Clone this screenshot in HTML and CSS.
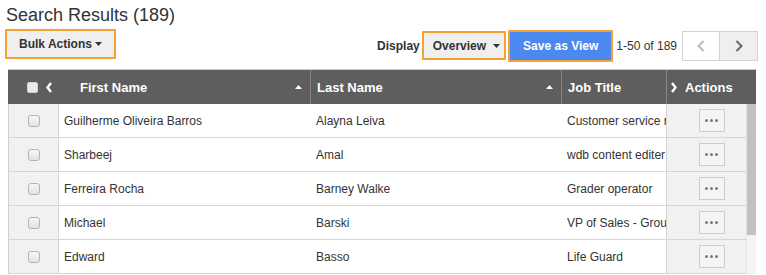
FILE: index.html
```html
<!DOCTYPE html>
<html lang="en">
<head>
  <meta charset="UTF-8">
  <title>Search Results</title>
  <link rel="stylesheet" href="styles.css">
</head>
<body>
  <h1 class="title">Search Results (189)</h1>

  <div class="toolbar">
    <button class="btn btn-bulk">Bulk Actions
      <svg class="caret" width="7" height="4" viewBox="0 0 7 4"><polygon points="0,0 7,0 3.5,4" fill="#333"/></svg>
    </button>
    <div class="toolbar-right">
      <span class="label">Display</span>
      <button class="btn btn-view">Overview
        <svg class="caret" width="7" height="4" viewBox="0 0 7 4"><polygon points="0,0 7,0 3.5,4" fill="#333"/></svg>
      </button>
      <button class="btn btn-save">Save as View</button>
      <span class="count">1-50 of 189</span>
      <div class="pager">
        <span class="pager-prev">
          <svg width="8" height="12" viewBox="0 0 8 12"><polyline points="6.5,1 1.5,6 6.5,11" fill="none" stroke="#bbb" stroke-width="2"/></svg>
        </span>
        <span class="pager-next">
          <svg width="8" height="12" viewBox="0 0 8 12"><polyline points="1.5,1 6.5,6 1.5,11" fill="none" stroke="#666" stroke-width="2"/></svg>
        </span>
      </div>
    </div>
  </div>

  <div class="grid">
    <div class="grid-head">
      <div class="hcell hcheck">
        <span class="hbox"></span>
        <svg width="6" height="11" viewBox="0 0 6 11"><polyline points="5,1 1.5,5.5 5,10" fill="none" stroke="#fff" stroke-width="2.4"/></svg>
      </div>
      <div class="hcell hfirst">First Name
        <svg width="7" height="4" viewBox="0 0 7 4"><polygon points="0,4 7,4 3.5,0" fill="#fff"/></svg>
      </div>
      <div class="hcell hlast">Last Name
        <svg width="7" height="4" viewBox="0 0 7 4"><polygon points="0,4 7,4 3.5,0" fill="#fff"/></svg>
      </div>
      <div class="hcell hjob">Job Title</div>
      <div class="hcell hact">
        <svg width="6" height="11" viewBox="0 0 6 11"><polyline points="1,1 4.5,5.5 1,10" fill="none" stroke="#fff" stroke-width="2.4"/></svg>
        Actions
      </div>
    </div>

    <div class="grid-body">
      <div class="row">
        <div class="cell ccheck"><span class="cbox"></span></div>
        <div class="cell cfirst">Guilherme Oliveira Barros</div>
        <div class="cell clast">Alayna Leiva</div>
        <div class="cell cjob">Customer service representative</div>
        <div class="cell cact"><span class="more"><i></i><i></i><i></i></span></div>
      </div>
      <div class="row">
        <div class="cell ccheck"><span class="cbox"></span></div>
        <div class="cell cfirst">Sharbeej</div>
        <div class="cell clast">Amal</div>
        <div class="cell cjob">wdb content editer</div>
        <div class="cell cact"><span class="more"><i></i><i></i><i></i></span></div>
      </div>
      <div class="row">
        <div class="cell ccheck"><span class="cbox"></span></div>
        <div class="cell cfirst">Ferreira Rocha</div>
        <div class="cell clast">Barney Walke</div>
        <div class="cell cjob">Grader operator</div>
        <div class="cell cact"><span class="more"><i></i><i></i><i></i></span></div>
      </div>
      <div class="row">
        <div class="cell ccheck"><span class="cbox"></span></div>
        <div class="cell cfirst">Michael</div>
        <div class="cell clast">Barski</div>
        <div class="cell cjob">VP of Sales - Group</div>
        <div class="cell cact"><span class="more"><i></i><i></i><i></i></span></div>
      </div>
      <div class="row">
        <div class="cell ccheck"><span class="cbox"></span></div>
        <div class="cell cfirst">Edward</div>
        <div class="cell clast">Basso</div>
        <div class="cell cjob">Life Guard</div>
        <div class="cell cact"><span class="more"><i></i><i></i><i></i></span></div>
      </div>

      <!-- scrollbar sits over the actions column -->
      <div class="scrollbar"><div class="thumb"></div></div>
    </div>
  </div>
</body>
</html>
```

FILE: styles.css
```css
* {
  box-sizing: border-box;
}
body {
  margin: 0;
  width: 766px;
  height: 275px;
  overflow: hidden;
  font-family: "Liberation Sans", Arial, sans-serif;
  color: #333;
  background: #fff;
}
.title {
  font-size: 18px;
  font-weight: normal;
  line-height: 21px;
  margin: 5px 0 0 6px;
}

/* toolbar */
.toolbar {
  display: flex;
  justify-content: space-between;
  align-items: flex-start;
  height: 33px;
  margin: 3px 8px 0 5px;
}
.toolbar-right {
  display: flex;
  align-items: flex-start;
  height: 33px;
}
.btn {
  display: inline-flex;
  align-items: center;
  font-family: inherit;
  font-size: 12px;
  font-weight: bold;
  color: #333;
  background: #efefef;
  border: 2px solid #f6a135;
  border-radius: 1px;
  margin: 0;
  cursor: pointer;
}
.btn-bulk {
  height: 30px;
  padding: 0 12px;
  gap: 3px;
}
.btn-view {
  height: 29px;
  margin: 2px 0 0 2px;
  padding: 0 4px 0 9px;
  gap: 7px;
}
.btn-save {
  height: 32px;
  margin: 1px 0 0 2px;
  padding: 0 13px;
  background: #4b89f0;
  color: #fff;
}
.label {
  align-self: center;
  font-size: 12px;
  font-weight: bold;
  line-height: 14px;
}
.count {
  align-self: center;
  font-size: 12px;
  line-height: 14px;
  margin-left: 3px;
}
.pager {
  display: flex;
  height: 30px;
  margin: 2px 0 0 5px;
  border: 1px solid #d2d2d2;
}
.pager span {
  display: flex;
  align-items: center;
  justify-content: center;
  width: 37px;
}
.pager-prev {
  background: #fff;
  border-right: 1px solid #d2d2d2;
}
.pager-next {
  background: #efefef;
}

/* grid */
.grid {
  width: 748px;
  margin: 7px 0 0 8px;
  font-size: 12px;
}
.grid-head {
  display: flex;
  height: 35px;
  background: #5e5e5e;
  border-top: 1px solid #c8c8c8;
  color: #fff;
  font-size: 13px;
  font-weight: bold;
}
.hcell {
  display: flex;
  align-items: center;
}
.hcheck {
  width: 64px;
  padding-left: 19px;
  gap: 8px;
}
.hbox {
  width: 11px;
  height: 11px;
  background: #e9e9e9;
  border: 1px solid #cfcfcf;
  border-radius: 2px;
}
.hfirst {
  width: 238px;
  padding: 0 8px;
  justify-content: space-between;
}
.hlast {
  width: 251px;
  padding: 0 8px 0 6px;
  justify-content: space-between;
  border-left: 1px solid #868686;
}
.hjob {
  width: 105px;
  padding-left: 6px;
  border-left: 1px solid #868686;
}
.hact {
  width: 90px;
  padding-left: 4px;
  gap: 8px;
  border-left: 1px solid #868686;
}

.grid-body {
  position: relative;
}
.row {
  display: flex;
  height: 34px;
  border-bottom: 1px solid #d6d6d6;
}
.cell {
  display: flex;
  align-items: center;
  white-space: nowrap;
  overflow: hidden;
}
.ccheck {
  width: 51px;
  justify-content: center;
  background: #f1f1f1;
  border-left: 1px solid #cfcfcf;
  border-right: 1px solid #d6d6d6;
}
.cbox {
  width: 12px;
  height: 12px;
  border: 1px solid #b4b4b4;
  border-radius: 3px;
  background: linear-gradient(#f7f7f7, #e2e2e2);
}
.cfirst {
  width: 251px;
  padding-left: 5px;
}
.clast {
  width: 251px;
  padding-left: 6px;
}
.cjob {
  width: 105px;
  padding-left: 6px;
}
.cact {
  width: 90px;
  justify-content: center;
  background: #f1f1f1;
  border-left: 1px solid #d2d2d2;
}
.more {
  display: flex;
  align-items: center;
  justify-content: center;
  gap: 2px;
  width: 26px;
  height: 23px;
  background: #f4f4f4;
  border: 1px solid #cdcdcd;
}
.more i {
  width: 3px;
  height: 3px;
  border-radius: 50%;
  background: #7a7a7a;
}
.scrollbar {
  position: absolute;
  top: 0;
  right: 0;
  bottom: 0;
  width: 10px;
  background: #f4f4f4;
  border-left: 1px solid #e4e4e4;
}
.thumb {
  height: 131px;
  background: #c1c1c1;
}
```
